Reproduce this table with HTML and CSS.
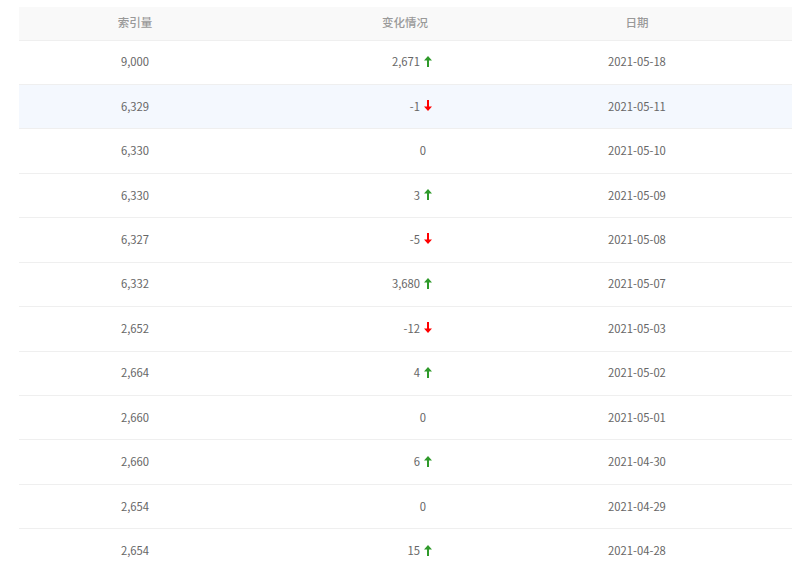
FILE: index.html
```html
<!DOCTYPE html>
<html lang="zh-CN">
<head>
<meta charset="utf-8">
<title>索引量</title>
<link rel="stylesheet" href="styles.css">
</head>
<body>
<div class="wrap">
  <table class="data">
    <colgroup>
      <col class="c1"><col class="c2"><col class="c3"><col class="c4">
    </colgroup>
    <thead>
      <tr><th>索引量</th><th>变化情况</th><th>日期</th><th></th></tr>
    </thead>
    <tbody>
      <tr><td>9,000</td><td><span class="chg">2,671<svg class="arr up" viewBox="0 0 8 11"><path d="M4 0 L8 4.5 H5 V11 H3 V4.5 H0 Z"/></svg></span></td><td>2021-05-18</td><td></td></tr>
      <tr class="hl"><td>6,329</td><td><span class="chg">-1<svg class="arr down" viewBox="0 0 8 11"><path d="M4 11 L8 6.5 H5 V0 H3 V6.5 H0 Z"/></svg></span></td><td>2021-05-11</td><td></td></tr>
      <tr><td>6,330</td><td><span class="chg zero">0</span></td><td>2021-05-10</td><td></td></tr>
      <tr><td>6,330</td><td><span class="chg">3<svg class="arr up" viewBox="0 0 8 11"><path d="M4 0 L8 4.5 H5 V11 H3 V4.5 H0 Z"/></svg></span></td><td>2021-05-09</td><td></td></tr>
      <tr><td>6,327</td><td><span class="chg">-5<svg class="arr down" viewBox="0 0 8 11"><path d="M4 11 L8 6.5 H5 V0 H3 V6.5 H0 Z"/></svg></span></td><td>2021-05-08</td><td></td></tr>
      <tr><td>6,332</td><td><span class="chg">3,680<svg class="arr up" viewBox="0 0 8 11"><path d="M4 0 L8 4.5 H5 V11 H3 V4.5 H0 Z"/></svg></span></td><td>2021-05-07</td><td></td></tr>
      <tr><td>2,652</td><td><span class="chg">-12<svg class="arr down" viewBox="0 0 8 11"><path d="M4 11 L8 6.5 H5 V0 H3 V6.5 H0 Z"/></svg></span></td><td>2021-05-03</td><td></td></tr>
      <tr><td>2,664</td><td><span class="chg">4<svg class="arr up" viewBox="0 0 8 11"><path d="M4 0 L8 4.5 H5 V11 H3 V4.5 H0 Z"/></svg></span></td><td>2021-05-02</td><td></td></tr>
      <tr><td>2,660</td><td><span class="chg zero">0</span></td><td>2021-05-01</td><td></td></tr>
      <tr><td>2,660</td><td><span class="chg">6<svg class="arr up" viewBox="0 0 8 11"><path d="M4 0 L8 4.5 H5 V11 H3 V4.5 H0 Z"/></svg></span></td><td>2021-04-30</td><td></td></tr>
      <tr><td>2,654</td><td><span class="chg zero">0</span></td><td>2021-04-29</td><td></td></tr>
      <tr><td>2,654</td><td><span class="chg">15<svg class="arr up" viewBox="0 0 8 11"><path d="M4 0 L8 4.5 H5 V11 H3 V4.5 H0 Z"/></svg></span></td><td>2021-04-28</td><td></td></tr>
    </tbody>
  </table>
</div>
</body>
</html>
```
FILE: styles.css
```css
html, body {
  margin: 0;
  padding: 0;
  background: #fff;
}
body {
  font-family: "Noto Sans CJK SC", "Liberation Sans", sans-serif;
  font-size: 11.25px;
  color: #666;
}
.wrap {
  padding: 7px 7px 0 19px;
}
.data {
  width: 773px;
  border-collapse: collapse;
  table-layout: fixed;
}
.c1 { width: 232px; }
.c2 { width: 308px; }
.c3 { width: 156px; }
.c4 { width: auto; }
.data th {
  height: 33px;
  padding: 0 0 2px;
  background: #f9f9f9;
  color: #999;
  font-size: 11.5px;
  font-weight: 500;
  text-align: center;
  border-bottom: 1px solid #efefef;
  box-sizing: border-box;
}
.data td {
  height: 44.45px;
  padding: 0 0 2px;
  text-align: center;
  border-bottom: 1px solid #efefef;
  box-sizing: border-box;
  white-space: nowrap;
}
.data tr.hl td {
  background: #f4f8fe;
}
.chg {
  display: inline-flex;
  align-items: center;
  justify-content: flex-end;
  width: 54px;
}
.chg.zero {
  padding-right: 6px;
  box-sizing: border-box;
}
.arr {
  width: 8px;
  height: 11px;
  margin-left: 4px;
}
.arr.up { fill: #2f9a2a; }
.arr.down { fill: #ff0000; }
```
